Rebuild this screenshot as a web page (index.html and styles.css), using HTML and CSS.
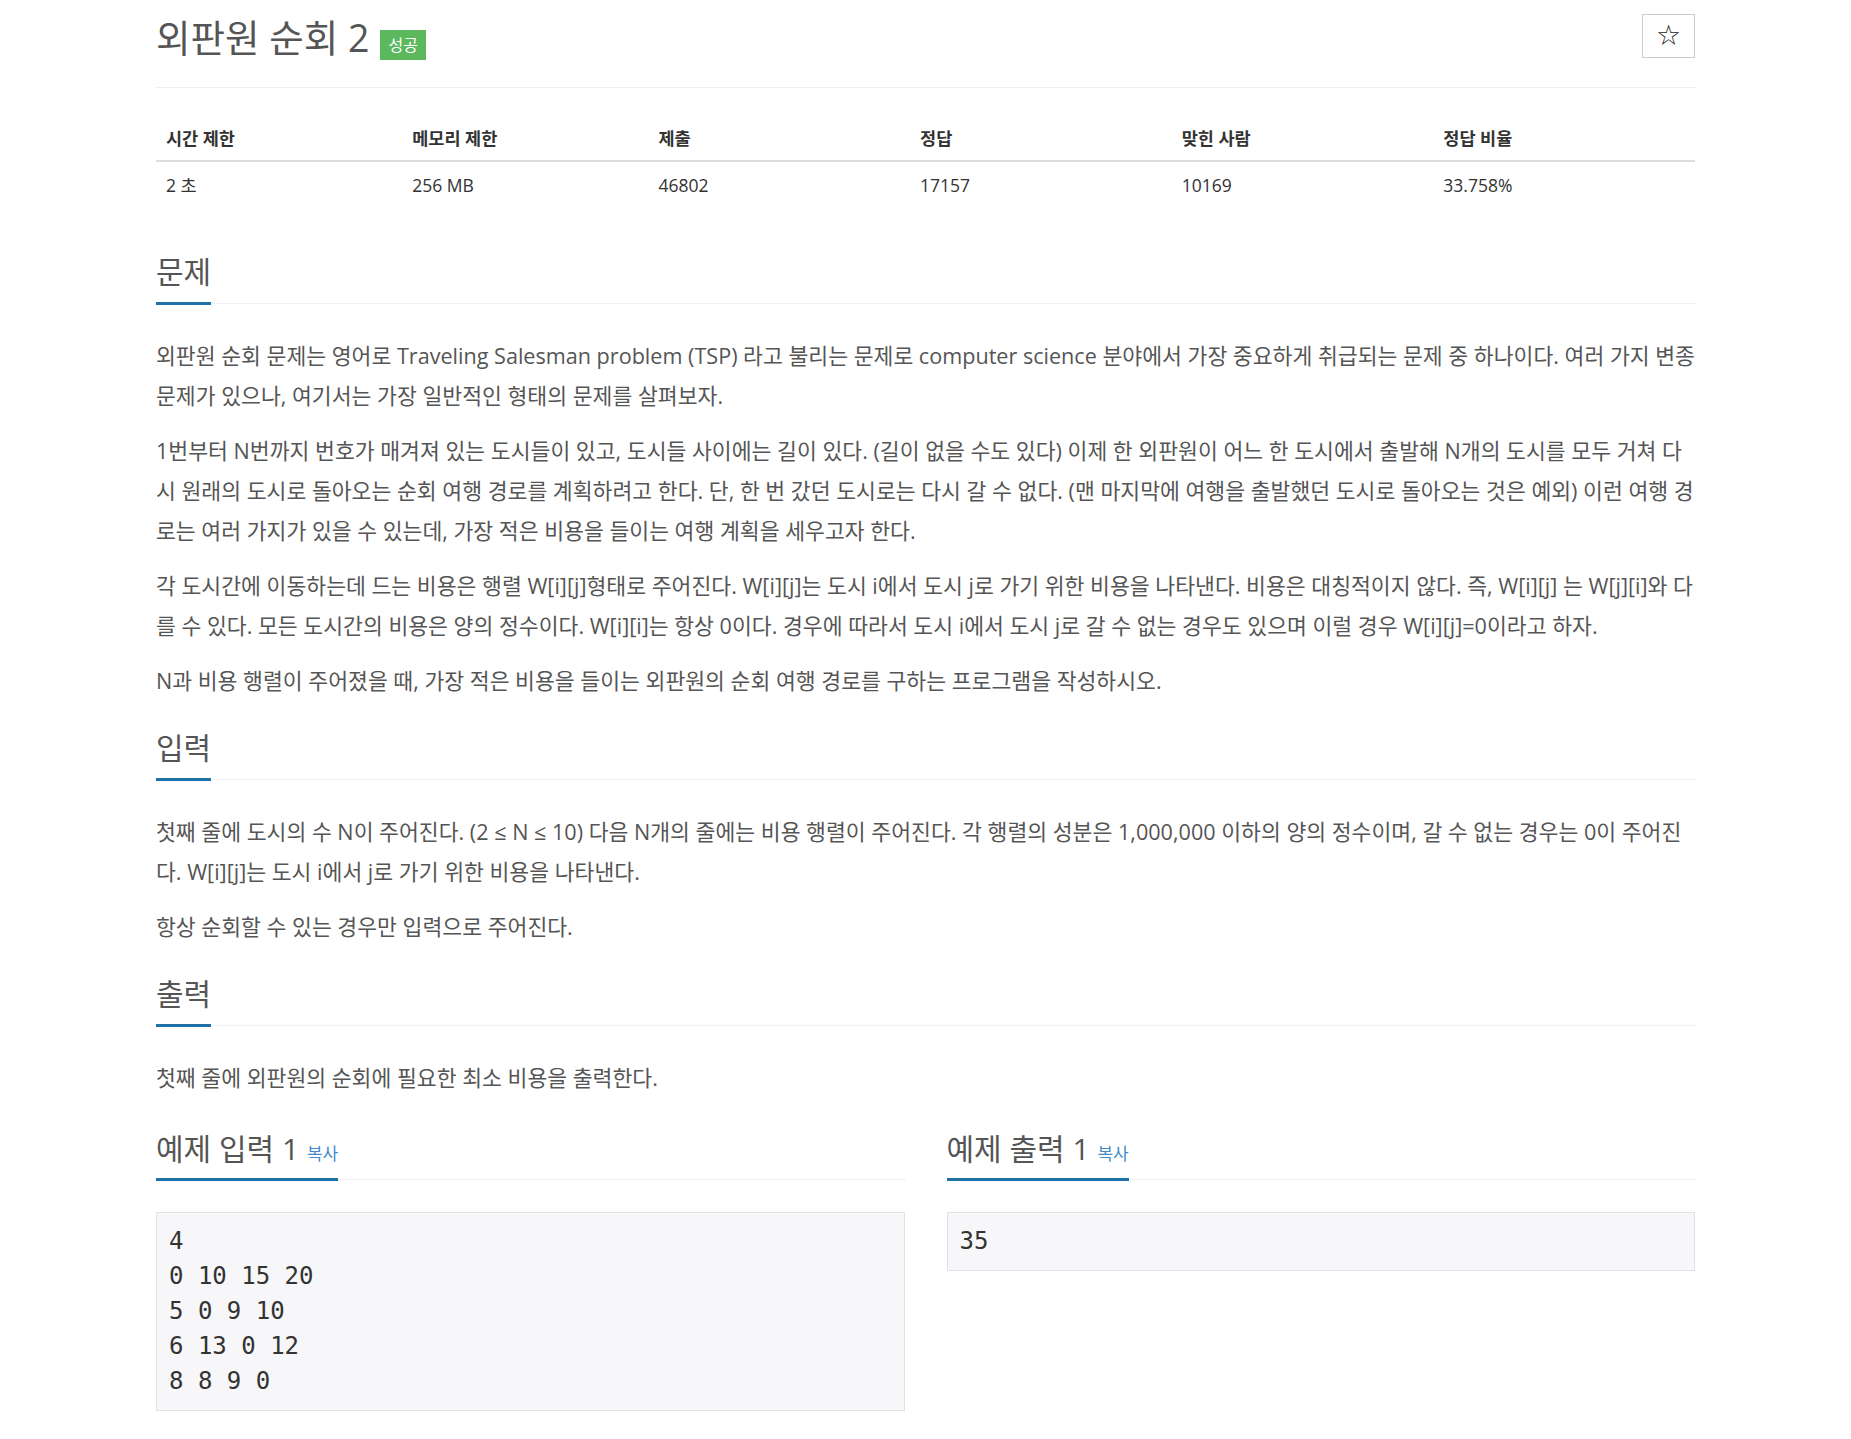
FILE: index.html
```html
<!DOCTYPE html>
<html lang="ko">
  <head>
    <meta charset="UTF-8" />
    <meta name="viewport" content="width=device-width, initial-scale=1.0" />
    <title>외판원 순회 2</title>
    <link rel="stylesheet" href="styles.css">
  </head>
  <body>
    <div class="container">
      <div class="page-header">
        <h1 class="problem-title">
          <span>외판원 순회 2</span>
          <span class="label-success">성공</span>
        </h1>
        <button class="star-button" type="button">☆</button>
      </div>

      <table class="problem-info">
        <thead>
          <tr>
            <th class="w16">시간 제한</th>
            <th class="w16">메모리 제한</th>
            <th class="w17">제출</th>
            <th class="w17">정답</th>
            <th class="w17">맞힌 사람</th>
            <th class="w17">정답 비율</th>
          </tr>
        </thead>
        <tbody>
          <tr>
            <td>2 초</td>
            <td>256 MB</td>
            <td>46802</td>
            <td>17157</td>
            <td>10169</td>
            <td>33.758%</td>
          </tr>
        </tbody>
      </table>

      <section class="problem-section first">
        <div class="headline">
          <h2>문제</h2>
        </div>
        <div class="problem-text">
          <p>외판원 순회 문제는 영어로 Traveling Salesman problem (TSP) 라고 불리는 문제로 computer science 분야에서 가장 중요하게 취급되는 문제 중 하나이다. 여러 가지 변종 문제가 있으나, 여기서는 가장 일반적인 형태의 문제를 살펴보자.</p>
          <p>1번부터 N번까지 번호가 매겨져 있는 도시들이 있고, 도시들 사이에는 길이 있다. (길이 없을 수도 있다) 이제 한 외판원이 어느 한 도시에서 출발해 N개의 도시를 모두 거쳐 다시 원래의 도시로 돌아오는 순회 여행 경로를 계획하려고 한다. 단, 한 번 갔던 도시로는 다시 갈 수 없다. (맨 마지막에 여행을 출발했던 도시로 돌아오는 것은 예외) 이런 여행 경로는 여러 가지가 있을 수 있는데, 가장 적은 비용을 들이는 여행 계획을 세우고자 한다.</p>
          <p>각 도시간에 이동하는데 드는 비용은 행렬 W[i][j]형태로 주어진다. W[i][j]는 도시 i에서 도시 j로 가기 위한 비용을 나타낸다. 비용은 대칭적이지 않다. 즉, W[i][j] 는 W[j][i]와 다를 수 있다. 모든 도시간의 비용은 양의 정수이다. W[i][i]는 항상 0이다. 경우에 따라서 도시 i에서 도시 j로 갈 수 없는 경우도 있으며 이럴 경우 W[i][j]=0이라고 하자.</p>
          <p>N과 비용 행렬이 주어졌을 때, 가장 적은 비용을 들이는 외판원의 순회 여행 경로를 구하는 프로그램을 작성하시오.</p>
        </div>
      </section>

      <section class="problem-section">
        <div class="headline">
          <h2>입력</h2>
        </div>
        <div class="problem-text">
          <p>첫째 줄에 도시의 수 N이 주어진다. (2 ≤ N ≤ 10) 다음 N개의 줄에는 비용 행렬이 주어진다. 각 행렬의 성분은 1,000,000 이하의 양의 정수이며, 갈 수 없는 경우는 0이 주어진다. W[i][j]는 도시 i에서 j로 가기 위한 비용을 나타낸다.</p>
          <p>항상 순회할 수 있는 경우만 입력으로 주어진다.</p>
        </div>
      </section>

      <section class="problem-section">
        <div class="headline">
          <h2>출력</h2>
        </div>
        <div class="problem-text">
          <p>첫째 줄에 외판원의 순회에 필요한 최소 비용을 출력한다.</p>
        </div>
      </section>

      <div class="sample-row">
        <section class="sample-section">
          <div class="headline">
            <h2>예제 입력 1 <a class="copy-button" href="#">복사</a></h2>
          </div>
          <pre class="sampledata">4
0 10 15 20
5 0 9 10
6 13 0 12
8 8 9 0</pre>
        </section>
        <section class="sample-section">
          <div class="headline">
            <h2>예제 출력 1 <a class="copy-button" href="#">복사</a></h2>
          </div>
          <pre class="sampledata">35</pre>
        </section>
      </div>
    </div>
  </body>
</html>
```

FILE: styles.css
```css
:root {
  font-family: "Open Sans", "Noto Sans CJK KR", sans-serif;
}

body {
  margin: 0;
  background-color: #fff;
  color: #555;
}

.container {
  width: 1539px;
  margin: 0 auto;
  padding-bottom: 30px;
}

.page-header {
  display: flex;
  justify-content: space-between;
  align-items: flex-start;
  padding-top: 15px;
  padding-bottom: 27px;
  border-bottom: 1px solid #eee;
}

.problem-title {
  display: flex;
  align-items: flex-end;
  gap: 11px;
  margin: 0;
  font-size: 37.5px;
  line-height: 45px;
  font-weight: 400;
  color: #555;
}

.label-success {
  background-color: #5cb85c;
  color: #fff;
  font-size: 16px;
  line-height: 18px;
  padding: 6px 8px;
  font-weight: 400;
}

.star-button {
  margin-top: -1px;
  width: 53px;
  height: 44px;
  background: #fff;
  border: 1px solid #ccc;
  color: #222;
  font-family: "DejaVu Sans", sans-serif;
  font-size: 28px;
  line-height: 1;
  padding: 0;
}

.problem-info {
  width: 100%;
  border-collapse: collapse;
  margin-top: 28px;
  color: #333;
  font-size: 17.5px;
  line-height: 24px;
}

.problem-info th {
  text-align: left;
  font-weight: 700;
  padding: 10px 10px;
  border-bottom: 2px solid #ddd;
}

.problem-info td {
  padding: 11px 10px 10px;
}

.w16 {
  width: 16%;
}

.w17 {
  width: 17%;
}

.problem-section {
  margin-top: 30px;
}

.problem-section.first {
  margin-top: 48px;
}

.headline {
  border-bottom: 1px dotted #e2e6ec;
  margin-bottom: 32px;
}

.headline h2 {
  display: inline-block;
  margin: 0 0 -2px 0;
  padding-bottom: 13px;
  border-bottom: 3px solid #1f72a6;
  font-size: 30px;
  line-height: 34px;
  font-weight: 400;
  color: #555;
}

.copy-button {
  font-size: 17px;
  line-height: 1;
  color: #428bca;
  text-decoration: none;
}

.sample-section .headline h2 {
  padding-bottom: 12px;
}

.problem-text {
  font-size: 21.6px;
  line-height: 40px;
}

.problem-text p {
  margin: 0 0 15px 0;
}

.sample-row {
  display: grid;
  grid-template-columns: 1fr 1fr;
  gap: 42px;
  margin-top: 34px;
}

.sampledata {
  margin: 0;
  padding: 11px 12px;
  background-color: #f7f7f9;
  border: 1px solid #e1e1e8;
  color: #333;
  font-family: "DejaVu Sans Mono", monospace;
  font-size: 24px;
  line-height: 35px;
}
```
